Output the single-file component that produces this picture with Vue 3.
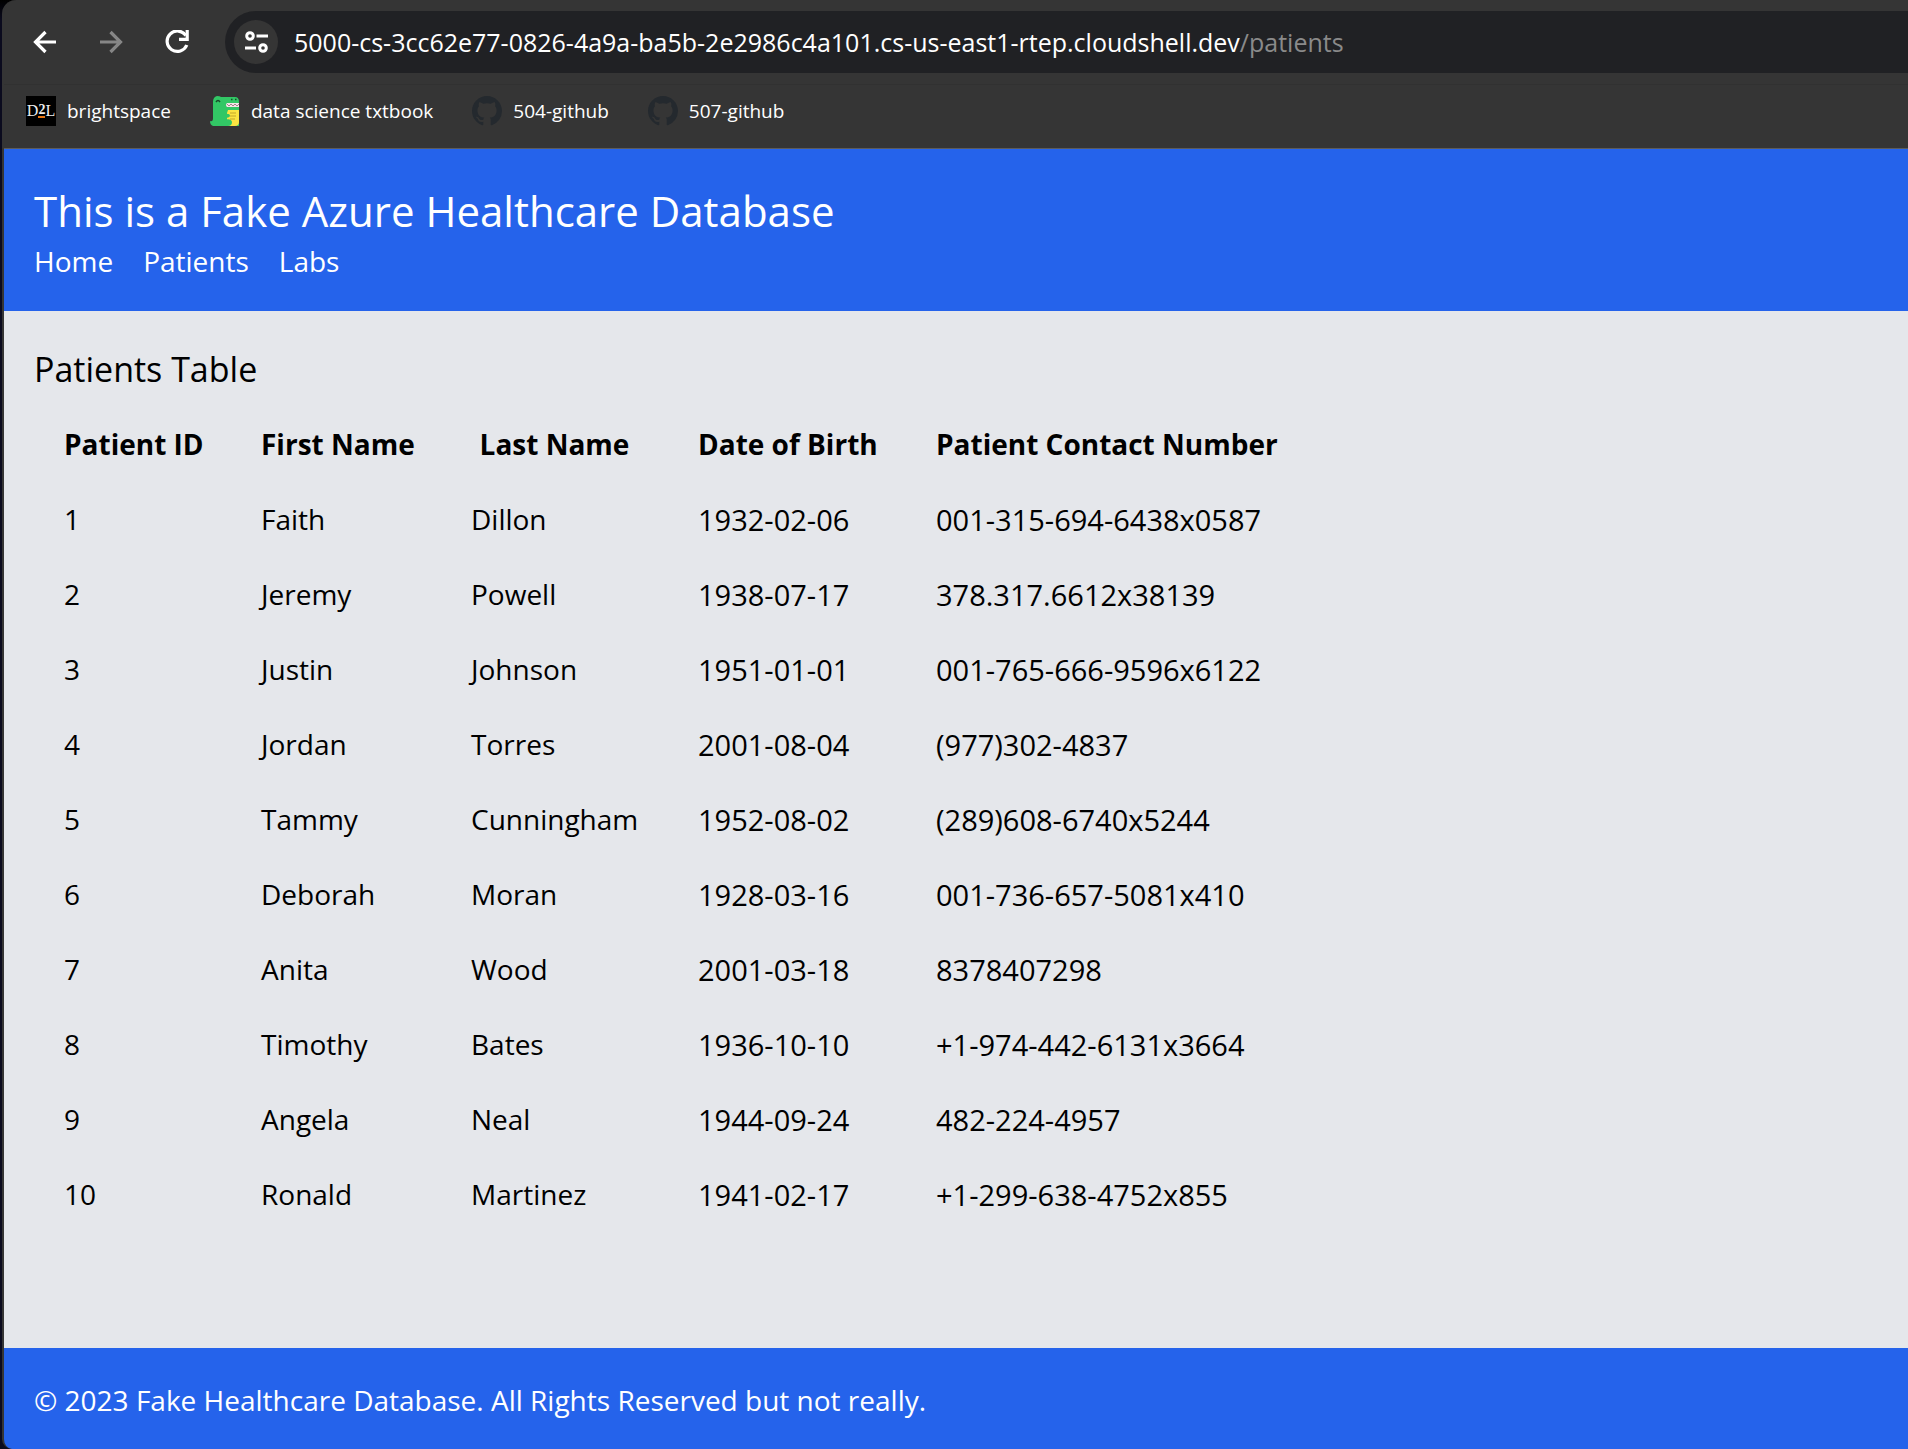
<script setup>
const bookmarks = [
  { label: 'brightspace', icon: 'd2l' },
  { label: 'data science txtbook', icon: 'dino' },
  { label: '504-github', icon: 'github' },
  { label: '507-github', icon: 'github' },
]

const links = ['Home', 'Patients', 'Labs']

const columns = ['Patient ID', 'First Name', 'Last Name', 'Date of Birth', 'Patient Contact Number']

const patients = [
  [1, 'Faith', 'Dillon', '1932-02-06', '001-315-694-6438x0587'],
  [2, 'Jeremy', 'Powell', '1938-07-17', '378.317.6612x38139'],
  [3, 'Justin', 'Johnson', '1951-01-01', '001-765-666-9596x6122'],
  [4, 'Jordan', 'Torres', '2001-08-04', '(977)302-4837'],
  [5, 'Tammy', 'Cunningham', '1952-08-02', '(289)608-6740x5244'],
  [6, 'Deborah', 'Moran', '1928-03-16', '001-736-657-5081x410'],
  [7, 'Anita', 'Wood', '2001-03-18', '8378407298'],
  [8, 'Timothy', 'Bates', '1936-10-10', '+1-974-442-6131x3664'],
  [9, 'Angela', 'Neal', '1944-09-24', '482-224-4957'],
  [10, 'Ronald', 'Martinez', '1941-02-17', '+1-299-638-4752x855'],
]
</script>

<template>
  <div class="desktop">
    <div class="window">
      <div class="toolbar">
        <button class="tool" type="button" aria-label="Back">
          <svg viewBox="0 0 24 24" width="24" height="24"><path d="M23 12H3M12.500 2 2.500 12l10 10" fill="none" stroke="#fff" stroke-width="3.200" /></svg>
        </button>
        <button class="tool" type="button" aria-label="Forward" disabled>
          <svg viewBox="0 0 24 24" width="24" height="24"><path d="M1 12h20M11.500 2l10 10-10 10" fill="none" stroke="#868686" stroke-width="3.200" /></svg>
        </button>
        <button class="tool" type="button" aria-label="Reload">
          <svg viewBox="0 0 24 24" width="24" height="24"><path d="M20.800 5.500A10.200 10.200 0 1 0 21.800 15" fill="none" stroke="#fff" stroke-width="3.200" /><path d="M22.200 0v9.400H14" fill="none" stroke="#fff" stroke-width="3.200" /></svg>
        </button>
        <div class="address">
          <button class="site-info" type="button" aria-label="View site information">
            <svg viewBox="0 0 24 24" width="24" height="24" fill="none" stroke="#fff" stroke-width="3"><circle cx="6" cy="6" r="3.300" /><path d="M12.500 6H24M1 18h11" /><circle cx="19" cy="18" r="3.300" /></svg>
          </button>
          <div class="url" role="textbox" aria-label="Address" contenteditable="true" spellcheck="false">5000-cs-3cc62e77-0826-4a9a-ba5b-2e2986c4a101.cs-us-east1-rtep.cloudshell.dev<span class="path">/patients</span></div>
        </div>
      </div>

      <nav class="bookmarks" aria-label="Bookmarks">
        <a v-for="b in bookmarks" :key="b.label" class="bookmark" href="#">
          <span v-if="b.icon === 'd2l'" class="d2l" aria-hidden="true">D<span class="two">2</span>L</span>
          <svg v-else-if="b.icon === 'dino'" viewBox="0 0 30 30" width="30" height="30" aria-hidden="true">
            <path d="M0 25q3 1 3-3V6Q3 1 7 0q3 0 4 1h14q4 0 4 5v24H3q-3-1-3-5z" fill="#32c765" />
            <path d="M17 7h12v4H17q-2-2 0-4z" fill="#f4e4e8" />
            <path d="m17 8 2 2 2-2 2 2 2-2 2 2 2-2" fill="none" stroke="#8d6a70" stroke-width=".8" />
            <path d="M18 14h11v12q0 4-4 4h-8V17z" fill="#fbe442" />
            <path d="M20 17h6M20 20h6M20 23h5" stroke="#c6a528" stroke-width="1.200" />
            <path d="M14 18q6-1 6 2-1 2-6 2zM14 24q7-2 8 2 0 4-4 4h-4z" fill="#32c765" />
            <path d="M6 6q2-3 4 0" fill="none" stroke="#174c2a" stroke-width="1.500" />
            <path d="M21 3.500h1.500M25 3.500h1.500" stroke="#174c2a" stroke-width="1.400" />
          </svg>
          <svg v-else viewBox="0 0 16 16" width="30" height="30" fill="#24292e" aria-hidden="true">
            <path d="M8 0C3.580 0 0 3.580 0 8c0 3.540 2.290 6.530 5.470 7.590.4.070.55-.17.55-.38 0-.19-.01-.82-.01-1.490-2.010.37-2.530-.49-2.690-.94-.09-.23-.48-.94-.82-1.130-.28-.15-.68-.52-.01-.53.63-.01 1.080.58 1.230.82.72 1.210 1.870.87 2.330.66.07-.52.28-.87.51-1.070-1.780-.2-3.640-.89-3.640-3.950 0-.87.31-1.590.82-2.150-.08-.2-.36-1.020.08-2.120 0 0 .67-.21 2.200.82.64-.18 1.320-.27 2-.27s1.360.09 2 .27c1.530-1.040 2.200-.82 2.200-.82.44 1.100.16 1.920.08 2.120.51.56.82 1.270.82 2.150 0 3.070-1.870 3.750-3.650 3.950.29.25.54.73.54 1.480 0 1.070-.01 1.930-.01 2.200 0 .21.15.46.55.38A8.010 8.010 0 0 0 16 8c0-4.420-3.580-8-8-8z" />
          </svg>
          <span>{{ b.label }}</span>
        </a>
      </nav>

      <header class="banner">
        <h1>This is a Fake Azure Healthcare Database</h1>
        <nav class="links" aria-label="Main">
          <a v-for="l in links" :key="l" href="#">{{ l }}</a>
        </nav>
      </header>

      <main>
        <h2 id="table-title">Patients Table</h2>
        <table aria-labelledby="table-title">
          <colgroup>
            <col class="c-id" />
            <col class="c-first" />
            <col class="c-last" />
            <col class="c-dob" />
            <col class="c-phone" />
          </colgroup>
          <thead>
            <tr>
              <th v-for="c in columns" :key="c" scope="col">{{ c }}</th>
            </tr>
          </thead>
          <tbody>
            <tr v-for="p in patients" :key="p[0]">
              <td v-for="(v, i) in p" :key="i" :class="{ digits: i === 3 }">{{ v }}</td>
            </tr>
          </tbody>
        </table>
      </main>

      <footer>© 2023 Fake Healthcare Database. All Rights Reserved but not really.</footer>
    </div>
  </div>
</template>

<style>
body {
  margin: 0;
  background: #0b0b1e;
}
</style>

<style scoped>
* {
  box-sizing: border-box;
}
.desktop {
  padding-left: 2px;
  background: linear-gradient(#000, #0b0b1e 20px);
  font-family: "Segoe UI", "Open Sans", "Noto Sans", sans-serif;
  font-size: 28px;
  line-height: 45px;
  overflow: hidden;
}
.window {
  display: flex;
  flex-direction: column;
  min-height: 100vh;
  border-left: 2px solid #353535;
  border-radius: 14px 0 0 10px;
  overflow: hidden;
  background: #353535;
}
button {
  display: flex;
  align-items: center;
  justify-content: center;
  padding: 0;
  border: 0;
  background: none;
}
svg {
  display: block;
  flex: none;
}
.toolbar {
  display: flex;
  align-items: center;
  height: 84px;
  padding-left: 18px;
}
.tool {
  flex: none;
  width: 46px;
  height: 46px;
  margin-right: 20px;
}
.address {
  display: flex;
  flex: 1;
  align-items: center;
  min-width: 0;
  height: 62px;
  margin-left: 5px;
  padding-left: 9px;
  border-radius: 31px 0 0 31px;
  background: #202124;
}
.site-info {
  flex: none;
  width: 44px;
  height: 44px;
  border-radius: 50%;
  background: #353535;
}
.url {
  margin-left: 16px;
  color: #fff;
  font-size: 25px;
  white-space: nowrap;
}
.path {
  color: #8a8a8a;
}
.bookmarks {
  display: flex;
  gap: 39px;
  height: 65px;
  padding: 11px 22px;
  border-top: 1px solid #313131;
  border-bottom: 1px solid #5c5c5c;
}
.bookmark {
  display: flex;
  align-items: center;
  gap: 11px;
  height: 30px;
  color: #fff;
  font-size: 19px;
  line-height: 30px;
  text-decoration: none;
}
.d2l {
  display: flex;
  justify-content: center;
  width: 30px;
  height: 30px;
  background: #000;
  color: #eee;
  font-family: "Liberation Serif", serif;
  font-size: 16px;
}
.two {
  height: 22px;
  border-bottom: 2px solid #e87511;
  font-size: 14px;
  font-weight: 700;
  line-height: 28px;
}
.banner {
  padding: 33px 30px 28px;
  background: #2563eb;
  color: #fff;
}
h1,
h2 {
  margin: 0;
  font-weight: 400;
}
h1 {
  font-size: 42px;
  line-height: 58px;
}
.links {
  display: flex;
  gap: 30px;
  line-height: 43px;
}
.links a {
  color: inherit;
  text-decoration: none;
}
main {
  flex: 1;
  padding: 32px 30px 30px;
  background: #e5e7eb;
  color: #000;
}
h2 {
  margin-bottom: 12px;
  font-size: 34px;
  line-height: 52px;
}
table {
  table-layout: fixed;
  width: 1268px;
  border-collapse: collapse;
}
.c-id {
  width: 197px;
}
.c-first {
  width: 210px;
}
.c-last {
  width: 227px;
}
.c-dob {
  width: 238px;
}
th,
td {
  padding: 15px 30px;
  text-align: left;
  white-space: nowrap;
}
th {
  text-align: center;
  font-weight: 700;
}
.digits,
.digits + td {
  font-size: 29px;
}
footer {
  padding: 30px 30px 26px;
  background: #2563eb;
  color: #fff;
}
</style>
